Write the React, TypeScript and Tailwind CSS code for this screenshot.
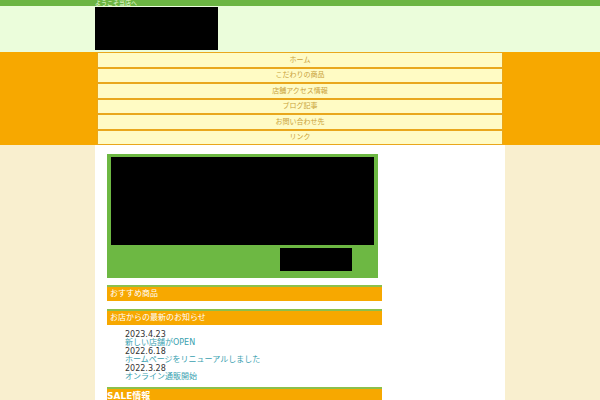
import React from "react";

const font = { fontFamily: '"DejaVu Sans", "Noto Sans CJK JP", sans-serif' };

const menu = ["ホーム", "こだわりの商品", "店舗アクセス情報", "ブログ記事", "お問い合わせ先", "リンク"];

const news = [
  { date: "2023.4.23", text: "新しい店舗がOPEN" },
  { date: "2022.6.18", text: "ホームページをリニューアルしました" },
  { date: "2022.3.28", text: "オンライン通販開始" },
];

export default function App() {
  return (
    <div className="w-full h-[400px] overflow-hidden bg-[#f9efcf]" style={font}>
      {/* top bar */}
      <div className="h-[6px] bg-[#6cb543]">
        <div className="w-[410px] mx-auto text-[6px] leading-[6px] text-[#e8ffd8]">ようこそ当店へ</div>
      </div>
      {/* header */}
      <div className="h-[46px] bg-[#ebfddb]">
        <div className="w-[410px] mx-auto pt-[1px]">
          <div className="w-[123px] h-[43px] bg-black" />
        </div>
      </div>
      {/* nav */}
      <div className="bg-[#f7a800]">
        <div className="w-[410px] mx-auto px-[2px] flex flex-col">
          {menu.map((m) => (
            <div
              key={m}
              className="h-[15.5px] border border-[#e9a71c] bg-[#fffbc4] flex items-center justify-center text-[7px] text-[#c9a23a]"
            >
              {m}
            </div>
          ))}
        </div>
      </div>
      {/* main */}
      <div className="w-[410px] mx-auto bg-white h-[260px] pl-[12px] pt-[9px]">
        <div className="w-[275px]">
          <div className="w-[271px] bg-[#6db843] pt-[3px] px-[4px] pb-[7px]">
            <div className="h-[88px] bg-black" />
            <div className="flex justify-end pr-[22px] mt-[3px]">
              <div className="w-[72px] h-[23px] bg-black" />
            </div>
          </div>
          <div className="mt-[7px] h-[16px] border-t-2 border-[#8cc04c] bg-[#f7a800] text-white text-[8px] leading-[14px] pl-[3px]">
            おすすめ商品
          </div>
          <div className="mt-[8px] h-[16px] border-t-2 border-[#8cc04c] bg-[#f7a800] text-white text-[8px] leading-[14px] pl-[3px]">
            お店からの最新のお知らせ
          </div>
          <div className="pl-[18px] pt-[6px] text-[8px] leading-[8.4px]">
            {news.map((n) => (
              <div key={n.date}>
                <div className="text-[#333333]">{n.date}</div>
                <div className="text-[#3a9fb0]">{n.text}</div>
              </div>
            ))}
          </div>
          <div className="mt-[6px] h-[16px] border-t-2 border-[#8cc04c] bg-[#f7a800] text-white text-[9px] font-bold leading-[14px]">
            SALE情報
          </div>
        </div>
      </div>
    </div>
  );
}
